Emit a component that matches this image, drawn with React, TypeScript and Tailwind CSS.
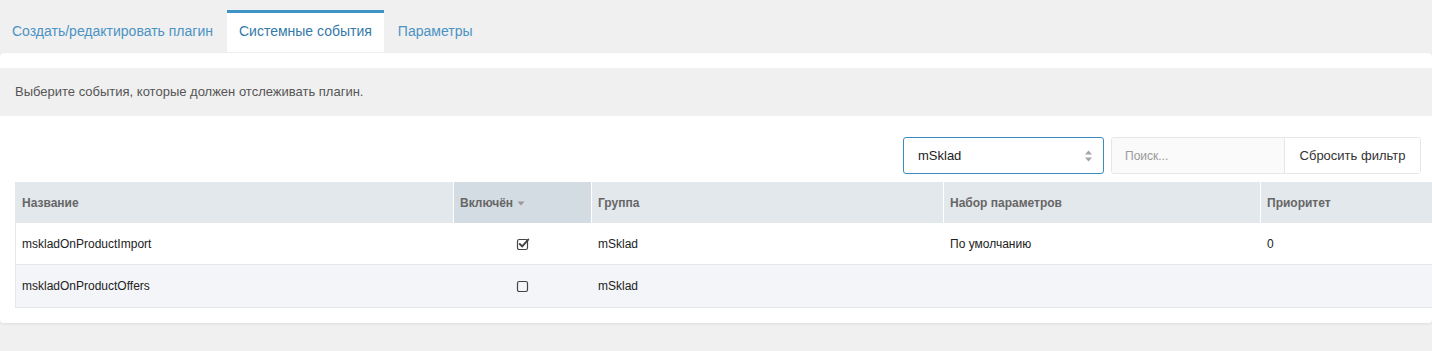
import { useState } from "react";

const tabs = ["Создать/редактировать плагин", "Системные события", "Параметры"];

const columns = [
  { title: "Название", width: "w-[438px]" },
  { title: "Включён", width: "w-[138px]", sorted: true },
  { title: "Группа", width: "w-[352px]" },
  { title: "Набор параметров", width: "w-[317px]" },
  { title: "Приоритет", width: "w-[220px]" },
];

const rows = [
  { name: "mskladOnProductImport", enabled: true, group: "mSklad", set: "По умолчанию", priority: "0" },
  { name: "mskladOnProductOffers", enabled: false, group: "mSklad", set: "", priority: "" },
];

const CheckIcon = ({ checked }: { checked: boolean }) => (
  <svg width="14" height="14" viewBox="0 0 14 14" className="text-[#444]">
    <rect x="1.5" y="2.5" width="10" height="10" rx="1.8" fill="none" stroke="currentColor" strokeWidth="1.2" />
    {checked && (
      <path d="M3.8 7 L6.2 9.4 L12.2 2.6" fill="none" stroke="currentColor" strokeWidth="2" strokeLinecap="round" />
    )}
  </svg>
);

const App = () => {
  const [active] = useState(1);

  return (
    <div className="min-h-[351px] bg-[#f0f0f0] font-['Liberation_Sans',Arial,sans-serif]">
      <div className="flex pt-[10px]">
        {tabs.map((tab, i) => (
          <div
            key={tab}
            className={
              i === active
                ? "mr-0.5 flex h-[42px] items-center border-t-[3px] border-[#3d94c5] bg-white px-3 pb-[3px] text-[14px] text-[#3579a8]"
                : "mr-0.5 flex h-[42px] items-center border-t-[3px] border-transparent px-3 pb-[3px] text-[14px] text-[#4a93c4]"
            }
          >
            {tab}
          </div>
        ))}
      </div>

      <div className="mt-px overflow-hidden rounded-sm bg-white pt-[15px] pb-[15px] shadow-[0_1px_3px_rgba(0,0,0,0.08)]">
        <div className="flex h-12 items-center bg-[#f0f0f0] px-[15px] text-[13px] text-[#555]">
          Выберите события, которые должен отслеживать плагин.
        </div>

        <div className="mt-[21px] flex justify-end gap-[7px] pr-[11px]">
          <div className="flex h-[37px] w-[201px] items-center justify-between rounded-[3px] border border-[#3a8bbf] pl-[14px] pr-[10px] text-[13px] text-[#222]">
            <span>mSklad</span>
            <svg width="9" height="14" viewBox="0 0 9 14" className="text-[#a5a5a5]">
              <path d="M4.5 1.5 L8 5.5 H1 Z" fill="currentColor" />
              <path d="M4.5 12.5 L8 8.5 H1 Z" fill="currentColor" />
            </svg>
          </div>
          <div className="flex h-[37px] overflow-hidden rounded-[3px] border border-[#e6e6e6]">
            <div className="flex w-[172px] items-center bg-[#fafafa] pl-[13px] text-[12px] text-[#999]">
              Поиск...
            </div>
            <div className="flex w-[136px] items-center justify-center border-l border-[#e6e6e6] bg-white text-[13px] text-[#333]">
              Сбросить фильтр
            </div>
          </div>
        </div>

        <div className="mt-2 ml-[15px] w-[1480px] border-l border-[#e3e8ec] text-[12px]">
          <div className="flex h-[41px] bg-[#e3e8ec]">
            {columns.map((col) => (
              <div
                key={col.title}
                className={`flex shrink-0 items-center gap-1 border-r border-white pl-[6px] font-bold text-[#666] ${col.width} ${col.sorted ? "bg-[#d4dce3]" : ""}`}
              >
                {col.title}
                {col.sorted && (
                  <svg width="8" height="5" viewBox="0 0 8 5" className="mt-px text-[#999]">
                    <path d="M0.5 0.5 H7.5 L4 4.5 Z" fill="currentColor" />
                  </svg>
                )}
              </div>
            ))}
          </div>
          {rows.map((row, i) => (
            <div
              key={row.name}
              className={`flex border-b border-[#e4e7ea] text-[#222] ${i % 2 ? "h-[43px] bg-[#f4f5f8]" : "h-[42px] bg-white"}`}
            >
              <div className="flex w-[438px] shrink-0 items-center pl-[6px]">{row.name}</div>
              <div className="flex w-[138px] shrink-0 items-center justify-center">
                <CheckIcon checked={row.enabled} />
              </div>
              <div className="flex w-[352px] shrink-0 items-center pl-[6px]">{row.group}</div>
              <div className="flex w-[317px] shrink-0 items-center pl-[6px]">{row.set}</div>
              <div className="flex w-[220px] shrink-0 items-center pl-[6px]">{row.priority}</div>
            </div>
          ))}
        </div>
      </div>
    </div>
  );
};

export default App;
